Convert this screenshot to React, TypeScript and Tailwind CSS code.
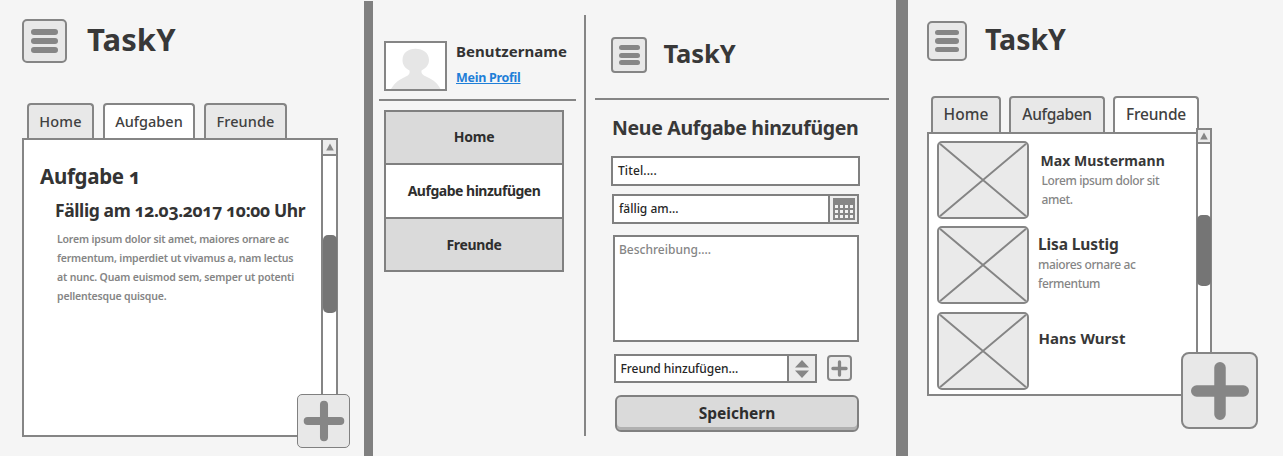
import React from 'react'

type TabItem = { label: string; active?: boolean; className: string }

function Plus({ className, thickness }: { className: string; thickness: number }) {
  return (
    <svg viewBox="0 0 60 60" className={className} aria-hidden="true">
      <path d={`M30 ${1 + thickness / 2}V${59 - thickness / 2}M${1 + thickness / 2} 30H${59 - thickness / 2}`} stroke="#868686" strokeWidth={thickness} strokeLinecap="round" />
    </svg>
  )
}

function MenuButton({ className, bar }: { className: string; bar: string }) {
  return (
    <button aria-label="Menü" className={`flex shrink-0 flex-col items-center justify-center border-2 border-[#858585] bg-[#e8e8e8] ${className}`}>
      <span className={`rounded-full bg-[#868686] ${bar}`} />
      <span className={`rounded-full bg-[#868686] ${bar}`} />
      <span className={`rounded-full bg-[#868686] ${bar}`} />
    </button>
  )
}

function Tabs({ items, className }: { items: TabItem[]; className: string }) {
  return (
    <nav className={`flex ${className}`}>
      {items.map((t) => (
        <button
          key={t.label}
          className={`whitespace-nowrap rounded-t-[4px] border-2 border-b-0 border-[#858585] text-center font-medium text-[#404040] ${t.active ? 'bg-white' : 'bg-[#e8e8e8]'} ${t.className}`}
        >
          {t.label}
        </button>
      ))}
    </nav>
  )
}

function Scrollbar({ className, thumb, border }: { className: string; thumb: string; border: string }) {
  return (
    <div className={`flex shrink-0 flex-col items-center border-[#858585] bg-white ${className}`}>
      <div className={`flex w-full shrink-0 items-center justify-center border-b-2 border-[#858585] bg-[#ececec] ${border}`}>
        <svg viewBox="0 0 8 8" className="size-[8px]"><path d="M4 .5L7.8 7.5H.2z" fill="#868686" /></svg>
      </div>
      <div className={`shrink-0 rounded-[5px] bg-[#757575] ${thumb}`} />
    </div>
  )
}

function PicturePlaceholder() {
  return (
    <div className="h-[78px] w-[92px] shrink-0 overflow-hidden rounded-[5px] border-2 border-[#858585] bg-[#eaeaea]">
      <svg viewBox="0 0 88 74" className="h-full w-full"><path d="M0 0L88 74M88 0L0 74" stroke="#858585" strokeWidth="2" /></svg>
    </div>
  )
}

function TaskScreen() {
  return (
    <section className="w-[364px] shrink-0 pl-[22px] pt-[19px]">
      <header className="flex h-[44px] items-start">
        <MenuButton className="h-[44px] w-[45px] gap-[3px] rounded-[5px]" bar="h-[6px] w-[27px]" />
        <h1 className="ml-[20px] text-[31px] font-bold leading-[40px] tracking-[0.1px] text-[#383838]">TaskY</h1>
      </header>
      <Tabs
        className="ml-[5px] mt-[40px] gap-[9px] text-[14.5px] leading-[33px]"
        items={[
          { label: 'Home', className: 'h-[35px] w-[67px] tracking-[0.2px]' },
          { label: 'Aufgaben', active: true, className: 'h-[35px] w-[92px]' },
          { label: 'Freunde', className: 'h-[35px] w-[83px] tracking-[0.1px]' },
        ]}
      />
      <div className="relative flex h-[299px] w-[316px] border-2 border-[#858585] bg-white">
        <article className="flex-1 whitespace-nowrap pl-[16px] pt-[22px]">
          <h2 className="text-[20.5px] font-bold leading-[28px] tracking-[-0.3px] text-[#333]">Aufgabe 1</h2>
          <h3 className="ml-[15px] mt-[6px] text-[17.5px] font-bold leading-[28px] tracking-[-0.4px] text-[#333]">Fällig am 12.03.2017 10:00 Uhr</h3>
          <p className="ml-[17px] mt-[6px] text-[10.5px] font-semibold leading-[19px] tracking-[-0.17px] text-[#858585]">
            Lorem ipsum dolor sit amet, maiores ornare ac<br />
            fermentum, imperdiet ut vivamus a, nam lectus<br />
            at nunc. Quam euismod sem, semper ut potenti<br />
            pellentesque quisque.
          </p>
        </article>
        <Scrollbar className="w-[15px] border-l-2" border="h-[16px]" thumb="mt-[79px] h-[78px] w-[14px]" />
        <button aria-label="Aufgabe hinzufügen" className="absolute -bottom-[13px] -right-[14px] flex h-[54px] w-[53px] items-center justify-center rounded-[5px] border border-[#808080] bg-[#e8e8e8]">
          <Plus className="size-[42px]" thickness={11.5} />
        </button>
      </div>
    </section>
  )
}

function Sidebar() {
  const row = 'flex items-center justify-center text-[14px] font-bold text-[#2e2e2e]'
  return (
    <aside className="w-[211px] shrink-0 pt-[41px]">
      <div className="flex pl-[11px]">
        <div className="h-[50px] w-[63px] border-2 border-[#858585] bg-white">
          <svg viewBox="0 0 59 46" className="h-full w-full">
            <path d="M16.5 17C16.5 10 22 5.800 29.500 5.800S43 10 43 17C43 22 40 25 35.500 27.500C35 31 37 32 41 34C48 37 52 41 54.500 46H5C8 41 12 37 19 34C23 32 24 31 23.500 27.500C19 25 16.500 22 16.500 17Z" fill="#e6e6e6" />
          </svg>
        </div>
        <div className="ml-[9px] whitespace-nowrap">
          <div className="text-[15px] font-bold leading-[20px] tracking-[0.06px] text-[#333]">Benutzername</div>
          <a href="#profil" className="mt-[8px] block text-[12.5px] font-bold leading-[18px] tracking-[-0.28px] text-[#1f7fd8] underline">Mein Profil</a>
        </div>
      </div>
      <hr className="ml-[6px] mt-[8px] h-[2px] w-[197px] border-0 bg-[#858585]" />
      <nav className="ml-[11px] mt-[9px] w-[180px] divide-y-2 divide-[#808080] border-2 border-[#808080]">
        <div className={`h-[53px] bg-[#dadada] pb-[2px] tracking-[-0.2px] ${row}`}>Home</div>
        <div className={`h-[54px] whitespace-nowrap bg-white pb-[2px] tracking-[-0.49px] ${row}`}>Aufgabe hinzufügen</div>
        <div className={`h-[51px] bg-[#dadada] tracking-[-0.34px] ${row}`}>Freunde</div>
      </nav>
    </aside>
  )
}

function CalendarIcon() {
  return (
    <svg viewBox="0 0 22 22" className="size-[22px]">
      <path fill="#868686" d="M0 0H22V22H0z" />
      <path fill="#f2f2f2" d="M2 7h3v3H2zM7 7h3v3H7zM12 7h3v3h-3zM17 7h3v3h-3zM2 12h3v3H2zM7 12h3v3H7zM12 12h3v3h-3zM17 12h3v3h-3zM2 17h3v3H2zM7 17h3v3H7zM12 17h3v3h-3zM17 17h3v3h-3z" />
    </svg>
  )
}

function TaskForm() {
  const box = 'border-2 border-[#808080] bg-white text-[12px] font-medium text-[#262626] whitespace-nowrap'
  return (
    <div className="w-[310px] pt-[37px]">
      <header className="ml-[25px] flex h-[36px] items-start">
        <MenuButton className="size-[36px] gap-[2.7px] rounded-[4px]" bar="h-[5px] w-[21px]" />
        <h1 className="ml-[16.5px] text-[25.5px] font-bold leading-[33px] tracking-[-0.1px] text-[#383838]">TaskY</h1>
      </header>
      <hr className="ml-[9px] mt-[25px] h-[2px] w-[294px] border-0 bg-[#858585]" />
      <h2 className="ml-[26px] mt-[15px] whitespace-nowrap text-[19.5px] font-bold leading-[26px] tracking-[-0.33px] text-[#383838]">Neue Aufgabe hinzufügen</h2>
      <div className={`ml-[25px] mt-[15px] flex h-[30px] w-[249px] items-center pl-[5px] tracking-[0.12px] ${box}`}>Titel....</div>
      <div className={`ml-[26px] mt-[8px] flex h-[30px] w-[247px] ${box}`}>
        <span className="flex flex-1 items-center pl-[5px]">fällig am...</span>
        <span className="flex w-[29px] items-center justify-center border-l-2 border-[#808080] bg-[#eeeeee]"><CalendarIcon /></span>
      </div>
      <div className={`ml-[27px] mt-[11px] h-[107px] w-[246px] pl-[4px] pt-[4px] leading-[18px] ${box}`}>
        <span className="text-[#858585]">Beschreibung....</span>
      </div>
      <div className="ml-[28px] mt-[12px] flex h-[29px]">
        <div className={`flex h-[29px] w-[203px] ${box}`}>
          <span className="flex flex-1 items-center pl-[4.5px] tracking-[-0.05px]">Freund hinzufügen...</span>
          <span className="flex w-[28px] items-center justify-center border-l-2 border-[#808080] bg-[#ebebeb]">
            <svg viewBox="0 0 14 18" className="h-[18px] w-[14px]"><path d="M7 0L14 7.500H0zM7 18L14 10.500H0z" fill="#868686" /></svg>
          </span>
        </div>
        <button aria-label="Freund hinzufügen" className="ml-[10px] mt-px flex h-[26px] w-[25px] items-center justify-center rounded-[4px] border-2 border-[#858585] bg-[#ececec]">
          <Plus className="size-[17px] shrink-0" thickness={11.5} />
        </button>
      </div>
      <button className="ml-[29px] mt-[12px] flex h-[37px] w-[244px] items-center justify-center rounded-[6px] border-2 border-[#808080] bg-[#dadada] pt-px text-[15.5px] font-bold text-[#2e2e2e] shadow-[inset_0_-3px_0_#b0b0b0]">
        Speichern
      </button>
    </div>
  )
}

function FriendsScreen() {
  const bio = 'text-[12px] font-medium leading-[19px] tracking-[-0.38px] text-[#858585]'
  return (
    <section className="w-[375px] shrink-0 pl-[19px] pt-[21px]">
      <header className="flex h-[40px] items-start">
        <MenuButton className="size-[40px] gap-[3px] rounded-[5px]" bar="h-[5.5px] w-[24px]" />
        <h1 className="ml-[18px] text-[28.5px] font-bold leading-[36px] tracking-[-0.05px] text-[#383838]">TaskY</h1>
      </header>
      <Tabs
        className="ml-[4px] mt-[35px] gap-[8px] text-[15.5px] leading-[31px]"
        items={[
          { label: 'Home', className: 'h-[36px] w-[70px] pb-px tracking-[0.1px]' },
          { label: 'Aufgaben', className: 'h-[36px] w-[96px] pb-px tracking-[-0.35px]' },
          { label: 'Freunde', active: true, className: 'h-[36px] w-[86px] pb-px tracking-[-0.15px]' },
        ]}
      />
      <div className="relative flex h-[264px] w-[285px]">
        <ul className="w-[269px] whitespace-nowrap border-2 border-r-0 border-[#858585] bg-white pl-[8px] pt-[7px]">
          <li className="flex h-[85px]">
            <PicturePlaceholder />
            <div className="ml-[11.5px] mt-[10px]">
              <h3 className="text-[14px] font-bold leading-[20px] tracking-[0.05px] text-[#383838]">Max Mustermann</h3>
              <p className={`ml-px ${bio}`}>Lorem ipsum dolor sit<br />amet.</p>
            </div>
          </li>
          <li className="flex h-[86px]">
            <PicturePlaceholder />
            <div className="ml-[9px] mt-[8px]">
              <h3 className="text-[15.5px] font-bold leading-[20px] tracking-[-0.13px] text-[#383838]">Lisa Lustig</h3>
              <p className={`mt-px ${bio}`}>maiores ornare ac<br />fermentum</p>
            </div>
          </li>
          <li className="flex">
            <PicturePlaceholder />
            <h3 className="ml-[9.5px] mt-[16px] text-[15px] font-bold leading-[20px] tracking-[0.05px] text-[#383838]">Hans Wurst</h3>
          </li>
        </ul>
        <Scrollbar className="-mt-[4px] w-[16px] border-2" border="h-[14px]" thumb="mt-[71px] h-[71px] w-[14px]" />
        <button aria-label="Freund hinzufügen" className="absolute -bottom-[33px] -right-[46px] flex size-[77px] items-center justify-center rounded-[8px] border-2 border-[#858585] bg-[#e8e8e8]">
          <Plus className="size-[60px]" thickness={11.5} />
        </button>
      </div>
    </section>
  )
}

export default function App() {
  return (
    <main className="flex h-[456px] w-[1283px] overflow-hidden bg-[#f5f5f5] font-['Noto_Sans',sans-serif] [font-feature-settings:'onum']">
      <TaskScreen />
      <div className="mt-px w-[9px] shrink-0 bg-[#808080]" />
      <section className="flex w-[523px] shrink-0">
        <Sidebar />
        <div className="mt-[15px] h-[421px] w-[2px] shrink-0 bg-[#858585]" />
        <TaskForm />
      </section>
      <div className="w-[12px] shrink-0 bg-[#808080]" />
      <FriendsScreen />
    </main>
  )
}
